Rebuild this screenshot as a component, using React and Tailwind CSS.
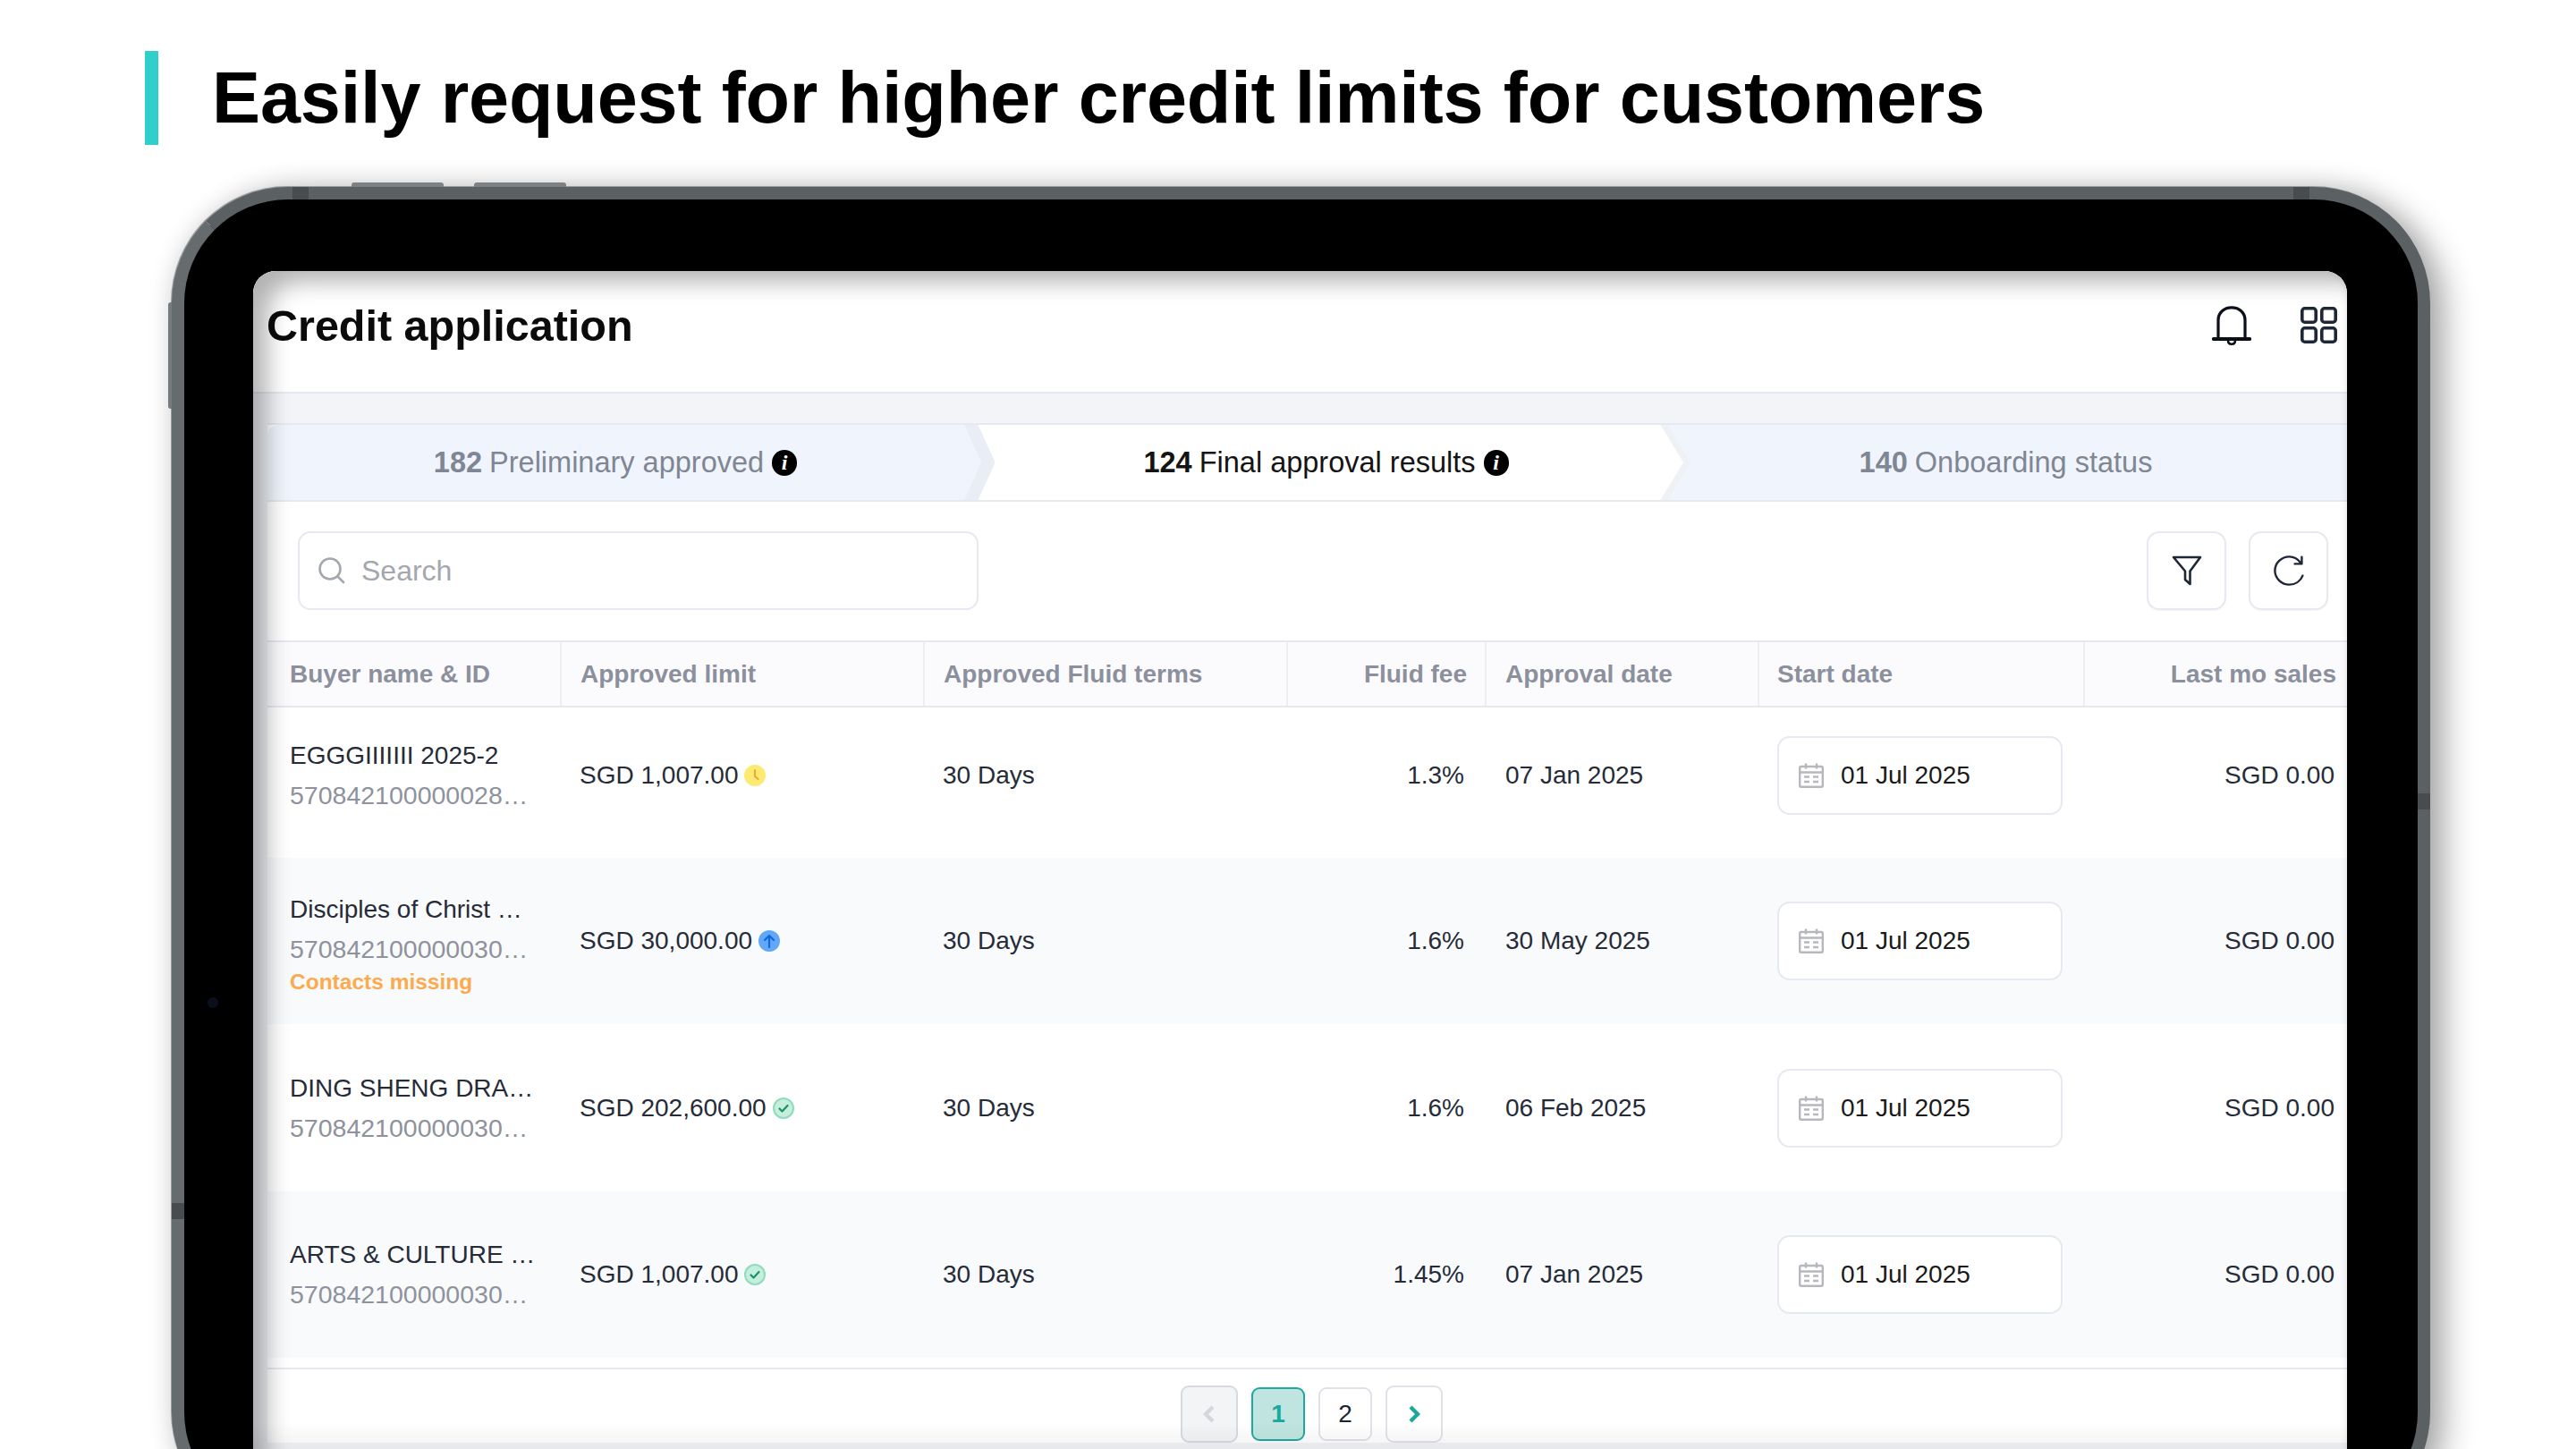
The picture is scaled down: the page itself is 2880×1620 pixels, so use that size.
import React from "react";

const COLS = "grid grid-cols-[329px_406px_406px_222px_305px_364px_293px]";

const rows = [
  { name: "EGGGIIIIIII 2025-2", id: "570842100000028…", amount: "SGD 1,007.00", status: "pending", fee: "1.3%", approved: "07 Jan 2025", height: "h-[168px] pb-[17px]" },
  { name: "Disciples of Christ …", id: "570842100000030…", warn: "Contacts missing", amount: "SGD 30,000.00", status: "up", fee: "1.6%", approved: "30 May 2025", height: "h-[186px]", tint: true },
  { name: "DING SHENG DRA…", id: "570842100000030…", amount: "SGD 202,600.00", status: "ok", fee: "1.6%", approved: "06 Feb 2025", height: "h-[187px]" },
  { name: "ARTS & CULTURE …", id: "570842100000030…", amount: "SGD 1,007.00", status: "ok", fee: "1.45%", approved: "07 Jan 2025", height: "h-[186px]", tint: true },
];

function StatusIcon({ type }) {
  if (type === "pending") {
    return (
      <svg width="24" height="24" viewBox="0 0 24 24" fill="none">
        <circle cx="12" cy="12" r="12" fill="#fdea72" />
        <path d="M12 6v7l3.5 3" stroke="#f0a92e" strokeWidth="2.2" strokeLinecap="round" strokeLinejoin="round" />
      </svg>
    );
  }
  if (type === "up") {
    return (
      <svg width="24" height="24" viewBox="0 0 24 24" fill="none">
        <circle cx="12" cy="12" r="12" fill="#62a8fa" />
        <path d="M12 19V6M7 11l5-5 5 5" stroke="#1467d6" strokeWidth="2.2" strokeLinecap="round" strokeLinejoin="round" />
      </svg>
    );
  }
  return (
    <svg width="24" height="24" viewBox="0 0 24 24" fill="none">
      <circle cx="12" cy="12" r="11" fill="#c6eedd" stroke="#8fdcbc" strokeWidth="2" />
      <path d="M7.5 12.5l3 3 6-6.5" stroke="#17936a" strokeWidth="2.2" strokeLinecap="round" strokeLinejoin="round" />
    </svg>
  );
}

function InfoDot() {
  return (
    <span className="ml-[9px] inline-flex h-[29px] w-[28px] items-center justify-center rounded-full bg-black font-['Liberation_Serif',serif] text-[24px] font-bold italic leading-none text-white">
      i
    </span>
  );
}

function Chevron({ className, fill, stroke, edge, fillEdge, width }) {
  return (
    <svg className={className} width="52" height="84" viewBox="0 0 52 84" fill="none">
      <path d={fillEdge} fill={fill} />
      <path d={edge} stroke={stroke} strokeWidth={width} strokeLinejoin="round" />
    </svg>
  );
}

function CalendarIcon() {
  return (
    <svg width="28" height="28" viewBox="0 0 28 28" fill="none" stroke="#b6b8bd" strokeWidth="2.4">
      <rect x="1.2" y="4" width="25.6" height="22.8" rx="1.5" />
      <path d="M1.2 10.5h25.6M8 0.5v6M20 0.5v6" />
      <path d="M6 15.5h6M16 15.5h6M6 21h6M16 21h6" strokeWidth="2.6" />
    </svg>
  );
}

export default function App() {
  return (
    <div className="h-[1620px] w-[2880px] overflow-hidden bg-white font-['Liberation_Sans',Arial,sans-serif]">
      {/* slide title */}
      <div className="flex items-center pl-[162px] pt-[57px]">
        <div className="h-[105px] w-[15px] bg-[#2fcfcb]" />
        <h1 className="ml-[60px] text-[81px] font-bold leading-none tracking-[-0.14px] text-black">
          Easily request for higher credit limits for customers
        </h1>
      </div>

      {/* tablet */}
      <div className="relative ml-[192px] mt-[47px] h-[1500px] w-[2525px] rounded-[130px] border-[14px] border-[#5b6062] border-l-[#666b6e] bg-black pl-[77px] pr-[79px] pt-[80px] shadow-[-1px_-1px_0_0_#9a9ea1,16px_8px_36px_rgba(0,0,0,0.32),0_0_30px_rgba(0,0,0,0.1)]">
        <div className="absolute left-[187px] top-[-19px] h-[5px] w-[103px] rounded-t-[3px] bg-[#7d8183]" />
        <div className="absolute left-[324px] top-[-19px] h-[5px] w-[103px] rounded-t-[3px] bg-[#7d8183]" />
        <div className="absolute left-[-18px] top-[115px] h-[119px] w-[4px] rounded-l-[3px] bg-[#777b7e]" />
        <div className="absolute left-[121px] top-[-14px] h-[14px] w-[18px] bg-[#484c4e]" />
        <div className="absolute right-[121px] top-[-14px] h-[14px] w-[18px] bg-[#484c4e]" />
        <div className="absolute left-[-14px] top-[1122px] h-[18px] w-[14px] bg-[#484c4e]" />
        <div className="absolute right-[-14px] top-[664px] h-[18px] w-[14px] bg-[#484c4e]" />
        <div className="absolute left-[26px] top-[892px] h-[12px] w-[12px] rounded-full bg-[#0b0f1c]" />

        {/* screen */}
        <div className="relative h-[1400px] overflow-hidden rounded-t-[25px] bg-[#f3f4f8]">
          <div className="flex h-[137px] items-center justify-between border-b-2 border-[#e6e8ef] bg-white pb-[14px] pl-[15px] pr-[11px]">
            <h2 className="text-[48.5px] font-bold leading-[56px] text-[#0b0b0b]">Credit application</h2>
            <div className="flex items-center gap-[55px]">
              <svg width="44" height="44" viewBox="0 0 44 44" fill="none" stroke="#0b0f18" strokeWidth="3.2" strokeLinecap="round">
                <path d="M7 37V16C7 7.5 13.5 1.8 22 1.8S37 7.5 37 16V37" />
                <path d="M1.8 37H42.2" strokeWidth="4" />
                <path d="M18 38.5c0 3 1.6 4.2 4 4.2s4-1.2 4-4.2" strokeWidth="2.6" />
              </svg>
              <svg width="41" height="41" viewBox="0 0 41 41" fill="none" stroke="#1e2637" strokeWidth="3.6">
                <rect x="1.8" y="1.8" width="15.4" height="15.4" rx="3" />
                <rect x="23.8" y="1.8" width="15.4" height="15.4" rx="3" />
                <rect x="1.8" y="23.8" width="15.4" height="15.4" rx="3" />
                <rect x="23.8" y="23.8" width="15.4" height="15.4" rx="3" />
              </svg>
            </div>
          </div>

          <div className="ml-[16px] mt-[33px] bg-white">
            {/* steps */}
            <div className="flex h-[88px] border-y-2 border-[#e6e9ef] text-[32.5px] text-[#7f8694]">
              <div className="relative flex w-[787px] items-center justify-center rounded-tl-[12px] bg-[#f0f5fd] pr-[9px]">
                <b className="mr-[8px] font-bold">182</b>Preliminary approved
                <InfoDot />
                <Chevron
                  className="absolute left-[779px] top-0 z-10"
                  fill="#f0f5fd"
                  stroke="#e8edf6"
                  width="14"
                  fillEdge="M0 -4H6L27 42L6 88H0Z"
                  edge="M6 -4L27 42L6 88"
                />
              </div>
              <div className="relative flex w-[775px] items-center justify-center bg-white pl-[18px] text-[#141414]">
                <b className="mr-[8px] font-bold">124</b>Final approval results
                <InfoDot />
                <Chevron
                  className="absolute left-[759px] top-0 z-10"
                  fill="#ffffff"
                  stroke="#eff1f5"
                  width="7"
                  fillEdge="M0 -4H13L41 42L13 88H0Z"
                  edge="M13 -4L41 42L13 88"
                />
              </div>
              <div className="flex flex-1 items-center justify-center bg-[#f0f5fd]">
                <b className="mr-[8px] font-bold">140</b>Onboarding status
              </div>
            </div>

            {/* search + actions */}
            <div className="flex items-start justify-between pb-[34px] pl-[34px] pr-[21px] pt-[33px]">
              <div className="flex h-[88px] w-[761px] items-center rounded-[14px] border-2 border-[#e6e9ef] pl-[20px]">
                <svg width="32" height="32" viewBox="0 0 32 32" fill="none" stroke="#a3a7ae" strokeWidth="2.6" strokeLinecap="round">
                  <circle cx="14" cy="14" r="11.5" />
                  <path d="M22.5 22.5L29 29" />
                </svg>
                <span className="ml-[17px] text-[32px] text-[#a3a7ae]">Search</span>
              </div>
              <div className="flex gap-[25px]">
                <button className="flex h-[88px] w-[89px] items-center justify-center rounded-[14px] border-2 border-[#e6e9ef] shadow-[0_1px_2px_rgba(0,0,0,0.04)]">
                  <svg width="34" height="34" viewBox="0 0 34 34" fill="none" stroke="#1e2637" strokeWidth="2.6" strokeLinejoin="round">
                    <path d="M2 2H32L20.5 17.5V32L15 27V17.5Z" />
                  </svg>
                </button>
                <button className="flex h-[88px] w-[89px] items-center justify-center rounded-[14px] border-2 border-[#e6e9ef] shadow-[0_1px_2px_rgba(0,0,0,0.04)]">
                  <svg width="36" height="36" viewBox="0 0 36 36" fill="none" stroke="#1e2637" strokeWidth="2.4" strokeLinecap="round" strokeLinejoin="round">
                    <path d="M31 9C27.6 4.6 23.4 2.4 18.6 2.4 9.8 2.4 2.4 9.4 2.4 18S9.8 33.6 18.6 33.6C25.4 33.6 31 29.6 33.4 23.6" />
                    <path d="M32.4 2.6V10.4H24.6" />
                  </svg>
                </button>
              </div>
            </div>

            {/* table */}
            <div className={`${COLS} h-[75px] items-center border-y-2 border-[#e6e9ef] bg-[#fbfbfe] text-[28px] font-bold text-[#8b909c]`}>
              <div className="flex h-full items-center border-r-2 border-[#eceef3] pl-[25px]">Buyer name &amp; ID</div>
              <div className="flex h-full items-center border-r-2 border-[#eceef3] pl-[21px]">Approved limit</div>
              <div className="flex h-full items-center border-r-2 border-[#eceef3] pl-[21px]">Approved Fluid terms</div>
              <div className="flex h-full items-center justify-end border-r-2 border-[#eceef3] pr-[20px]">Fluid fee</div>
              <div className="flex h-full items-center border-r-2 border-[#eceef3] pl-[21px]">Approval date</div>
              <div className="flex h-full items-center border-r-2 border-[#eceef3] pl-[20px]">Start date</div>
              <div className="flex h-full items-center justify-end pr-[12px]">Last mo sales</div>
            </div>

            {rows.map((row) => (
              <div key={row.name} className={`${COLS} ${row.height} items-center text-[28px] text-[#262b38] ${row.tint ? "bg-[#f9fafc]" : "bg-white"}`}>
                <div className={`flex flex-col pl-[25px] ${row.warn ? "pt-[8px]" : ""}`}>
                  <span className="leading-[32px]">{row.name}</span>
                  <span className="mt-[12px] text-[28.5px] leading-[32px] text-[#8e929c]">{row.id}</span>
                  {row.warn && <span className="mt-[7px] text-[24.5px] font-bold leading-[28px] text-[#fbaa50]">{row.warn}</span>}
                </div>
                <div className="flex items-center pl-[20px]">
                  {row.amount}
                  <span className="ml-[7px] flex">
                    <StatusIcon type={row.status} />
                  </span>
                </div>
                <div className="pl-[20px]">30 Days</div>
                <div className="pr-[25px] text-right">{row.fee}</div>
                <div className="pl-[21px]">{row.approved}</div>
                <div className="pl-[20px]">
                  <div className="flex h-[88px] w-[319px] items-center rounded-[14px] border-2 border-[#e6e9ef] bg-white pl-[22px] text-[#1a1a1a]">
                    <CalendarIcon />
                    <span className="ml-[19px]">01 Jul 2025</span>
                  </div>
                </div>
                <div className="pr-[14px] text-right">SGD 0.00</div>
              </div>
            ))}

            {/* pagination */}
            <div className="mt-[11px] flex items-start justify-center gap-[15px] border-t-2 border-[#e6e9ef] pl-[10px] pt-[18px] text-[28px]">
              <button className="flex h-[64px] w-[64px] items-center justify-center rounded-[9px] border-2 border-[#d8dae0] bg-[#f3f4f6]">
                <svg width="14" height="20" viewBox="0 0 14 20" fill="none" stroke="#d3d6dc" strokeWidth="4.4"><path d="M11 2L3 10l8 8" /></svg>
              </button>
              <button className="mt-[2px] flex h-[60px] w-[60px] items-center justify-center rounded-[9px] border-2 border-[#1fa99e] bg-[#c0e5e1] font-bold text-[#1aa89c]">1</button>
              <button className="mt-[2px] flex h-[60px] w-[60px] items-center justify-center rounded-[9px] border-2 border-[#e0e2e8] text-[#1e2432]">2</button>
              <button className="flex h-[64px] w-[64px] items-center justify-center rounded-[9px] border-2 border-[#e0e2e8]">
                <svg width="14" height="20" viewBox="0 0 14 20" fill="none" stroke="#1aa89c" strokeWidth="4.4"><path d="M3 2l8 8-8 8" /></svg>
              </button>
            </div>
          </div>

          {/* glass shading from the bezel */}
          <div className="pointer-events-none absolute inset-0 z-20 rounded-t-[25px] shadow-[inset_26px_22px_26px_-10px_rgba(0,0,0,0.3),inset_-6px_0_8px_-6px_rgba(0,0,0,0.12)]" />
          <div className="pointer-events-none absolute left-0 right-0 top-[1287px] z-20 h-[30px] bg-linear-to-b from-transparent to-[#0000000d]" />
        </div>
      </div>
    </div>
  );
}
